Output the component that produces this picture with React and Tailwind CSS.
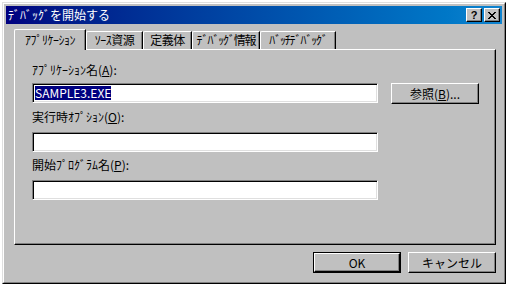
const ui = { fontFamily: '"Noto Sans CJK JP", "Noto Sans", sans-serif' };

function Tab({ label, active, w, tight }) {
  return (
    <div
      className={`relative flex justify-center border-l border-t border-r border-l-white border-t-white border-r-black rounded-tl-[2px] shadow-[inset_-1px_0_#808080] text-[12px] leading-[14px] text-black whitespace-nowrap ${
        tight ? "tracking-[-1.2px]" : "tracking-[-0.5px]"
      } ${w} ${active ? "z-10 h-[21px] pt-[3px] -mb-[1px] bg-[#c0c0c0]" : "h-[18px] pt-[1px]"}`}
    >
      {label}
    </div>
  );
}

function Field({ children }) {
  return (
    <div className="h-[20px] w-[346px] border border-t-[#808080] border-l-[#808080] border-b-white border-r-white bg-white shadow-[inset_1px_1px_#000,inset_-1px_-1px_#dfdfdf] px-[2px] pt-[2px]">
      {children}
    </div>
  );
}

function Button({ children, isDefault, className = "" }) {
  return (
    <div
      className={`flex items-center justify-center h-[21px] w-[88px] text-[12px] leading-[14px] text-black ${
        isDefault ? "border border-black" : ""
      } ${className}`}
    >
      <div className="flex items-center justify-center w-full h-full border border-t-white border-l-white border-b-black border-r-black shadow-[inset_-1px_-1px_#808080]">
        {children}
      </div>
    </div>
  );
}

export default function App() {
  return (
    <div className="w-[511px] h-[286px] bg-white pl-[2px] pt-[2px]" style={ui}>
      <div className="w-[504px] h-[282px] bg-[#c0c0c0] border border-t-[#dfdfdf] border-l-[#dfdfdf] border-b-black border-r-black">
        <div className="h-full border border-t-white border-l-white border-b-[#808080] border-r-[#808080] p-[2px] flex flex-col">
          {/* title bar */}
          <div className="h-[18px] flex items-center justify-between bg-gradient-to-r from-[#000080] to-[#1084d0] pl-[2px] pr-[2px]">
            <span className="text-white text-[12px] leading-[14px]">ﾃﾞﾊﾞｯｸﾞを開始する</span>
            <div className="flex items-center gap-[2px]">
              <div className="w-[16px] h-[14px] bg-[#c0c0c0] border border-t-white border-l-white border-b-black border-r-black shadow-[inset_-1px_-1px_#808080] flex items-center justify-center text-[11px] font-bold leading-none text-black" style={{ fontFamily: '"Liberation Sans", sans-serif' }}>
                ?
              </div>
              <div className="w-[16px] h-[14px] bg-[#c0c0c0] border border-t-white border-l-white border-b-black border-r-black shadow-[inset_-1px_-1px_#808080] flex items-center justify-center">
                <svg width="8" height="7" viewBox="0 0 8 7">
                  <path d="M0 0h2v1h1v1h2V1h1V0h2v1H7v1H6v1H5v1h1v1h1v1h1v1H6V6H5V5H3v1H2v1H0V6h1V5h1V4h1V3H2V2H1V1H0z" fill="#000" />
                </svg>
              </div>
            </div>
          </div>

          {/* tabs + panel */}
          <div className="pl-[8px] pr-[6px] pt-[4px]">
            <div className="flex items-end h-[21px]">
              <Tab label="ｱﾌﾟﾘｹｰｼｮﾝ" active w="w-[72px]" />
              <Tab label="ｿｰｽ資源" w="w-[57px]" />
              <Tab label="定義体" w="w-[49px]" />
              <Tab label="ﾃﾞﾊﾞｯｸﾞ情報" w="w-[68px]" tight />
              <Tab label="ﾊﾞｯﾁﾃﾞﾊﾞｯｸﾞ" w="w-[76px]" tight />
            </div>
            <div className="h-[196px] border border-t-white border-l-white border-b-black border-r-black shadow-[inset_-1px_-1px_#808080] pl-[17px] pt-[13px]">
              <div className="text-[12px] leading-[14px] text-black">
                ｱﾌﾟﾘｹｰｼｮﾝ名(<span className="underline">A</span>):
              </div>
              <div className="flex items-start mt-[6px]">
                <Field>
                  <span className="bg-[#000080] text-white text-[12px] leading-[14px] block w-fit">SAMPLE3.EXE</span>
                </Field>
                <Button className="ml-[13px]">
                  参照(<span className="underline">B</span>)...
                </Button>
              </div>
              <div className="text-[12px] leading-[14px] text-black mt-[6px]">
                実行時ｵﾌﾟｼｮﾝ(<span className="underline">O</span>):
              </div>
              <div className="mt-[8px]">
                <Field />
              </div>
              <div className="text-[12px] leading-[14px] text-black mt-[6px]">
                開始ﾌﾟﾛｸﾞﾗﾑ名(<span className="underline">P</span>):
              </div>
              <div className="mt-[8px]">
                <Field />
              </div>
            </div>
          </div>

          {/* bottom buttons */}
          <div className="flex justify-end gap-[7px] pr-[6px] pt-[7px]">
            <Button isDefault>OK</Button>
            <Button>キャンセル</Button>
          </div>
        </div>
      </div>
    </div>
  );
}
